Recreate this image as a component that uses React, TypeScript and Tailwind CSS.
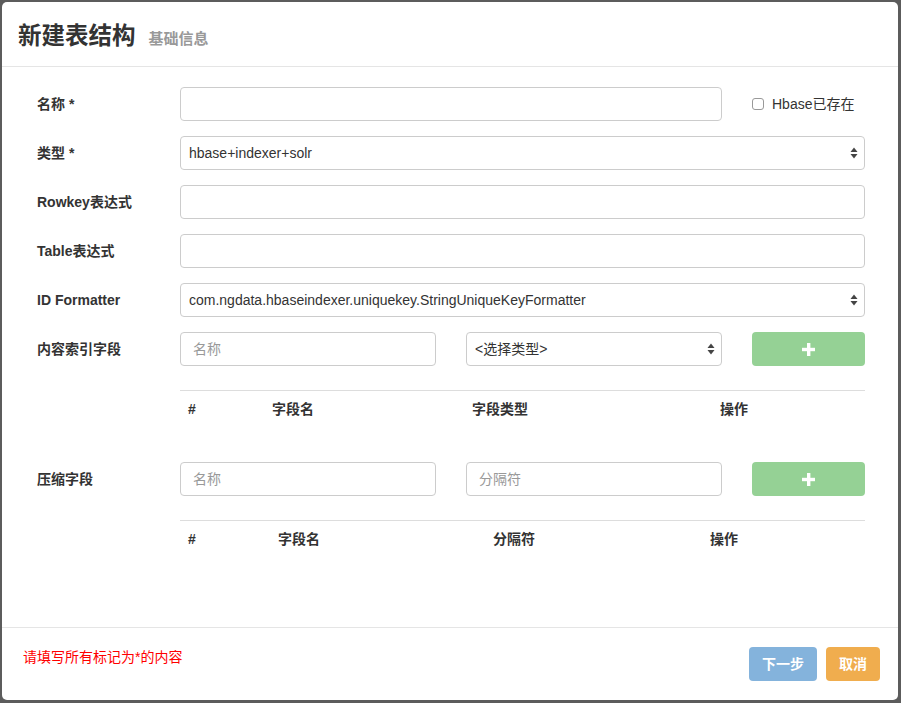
import React from 'react';

const font = { fontFamily: '"Liberation Sans", "Noto Sans CJK SC", sans-serif' };

function Arrows() {
  return (
    <svg width="8" height="12" viewBox="0 0 8 12" className="shrink-0">
      <path d="M4 0.5 L7.5 5 L0.5 5 Z" fill="#444" />
      <path d="M4 11.5 L7.5 7 L0.5 7 Z" fill="#444" />
    </svg>
  );
}

function TextBox({ placeholder }: { placeholder?: string }) {
  return (
    <div className="h-[34px] w-full rounded border border-[#ccc] bg-white px-3 flex items-center text-[14px] text-[#999]">
      {placeholder}
    </div>
  );
}

function SelectBox({ value }: { value: string }) {
  return (
    <div className="h-[34px] w-full rounded border border-[#ccc] bg-white pl-2 pr-[6px] flex items-center justify-between text-[14px] text-[#333]">
      <span>{value}</span>
      <Arrows />
    </div>
  );
}

function AddButton() {
  return (
    <div className="h-[34px] rounded bg-[#95d195] flex items-center justify-center text-white">
      <svg width="13" height="13" viewBox="0 0 13 13">
        <rect x="5" y="0" width="3.4" height="13" fill="#fff" />
        <rect x="0" y="4.8" width="13" height="3.4" fill="#fff" />
      </svg>
    </div>
  );
}

function Row({ label, children }: { label: string; children: React.ReactNode }) {
  return (
    <div className="flex items-center h-[34px]">
      <div className="w-[143px] shrink-0 text-[14px] font-bold text-[#333]">{label}</div>
      <div className="flex-1">{children}</div>
    </div>
  );
}

function TableHead({ cols }: { cols: { text: string; w: string }[] }) {
  return (
    <div className="ml-[143px] border-t border-[#ddd] h-[38px] flex items-center pl-2 text-[14px] font-bold text-[#333]">
      {cols.map((c) => (
        <div key={c.text} className={c.w}>
          {c.text}
        </div>
      ))}
    </div>
  );
}

export default function App() {
  return (
    <div className="w-[901px] h-[703px] bg-[#5c5c5c] pt-[2px] pl-[2px] pr-[3px] pb-[3px]" style={font}>
      <div className="h-full w-full bg-white rounded-[5px] flex flex-col overflow-hidden">
        <div className="h-[65px] border-b border-[#e5e5e5] flex items-baseline pl-4 pt-[19px]">
          <span className="text-[23.5px] font-bold text-[#333] leading-[30px]">新建表结构</span>
          <span className="ml-[13px] text-[15px] text-[#999] font-bold">基础信息</span>
        </div>

        <div className="flex-1 pl-[35px] pr-[33px] pt-[20px] text-[#333]">
          <div className="flex flex-col gap-[15px]">
            <Row label="名称 *">
              <div className="flex items-center">
                <div className="w-[542px]">
                  <TextBox />
                </div>
                <label className="ml-[30px] flex items-center gap-[8px] text-[14px]">
                  <span className="w-[12px] h-[12px] rounded-[3px] border border-[#999] bg-white" />
                  Hbase已存在
                </label>
              </div>
            </Row>
            <Row label="类型 *">
              <SelectBox value="hbase+indexer+solr" />
            </Row>
            <Row label="Rowkey表达式">
              <TextBox />
            </Row>
            <Row label="Table表达式">
              <TextBox />
            </Row>
            <Row label="ID Formatter">
              <SelectBox value="com.ngdata.hbaseindexer.uniquekey.StringUniqueKeyFormatter" />
            </Row>
            <Row label="内容索引字段">
              <div className="grid grid-cols-[256px_256px_113px] gap-[30px]">
                <TextBox placeholder="名称" />
                <SelectBox value="<选择类型>" />
                <AddButton />
              </div>
            </Row>
          </div>

          <div className="mt-[24px]">
            <TableHead
              cols={[
                { text: '#', w: 'w-[84px]' },
                { text: '字段名', w: 'w-[200px]' },
                { text: '字段类型', w: 'w-[248px]' },
                { text: '操作', w: 'w-[60px]' },
              ]}
            />
          </div>

          <div className="mt-[34px]">
            <Row label="压缩字段">
              <div className="grid grid-cols-[256px_256px_113px] gap-[30px]">
                <TextBox placeholder="名称" />
                <TextBox placeholder="分隔符" />
                <AddButton />
              </div>
            </Row>
          </div>

          <div className="mt-[24px]">
            <TableHead
              cols={[
                { text: '#', w: 'w-[90px]' },
                { text: '字段名', w: 'w-[215px]' },
                { text: '分隔符', w: 'w-[217px]' },
                { text: '操作', w: 'w-[60px]' },
              ]}
            />
          </div>
        </div>

        <div className="h-[73px] border-t border-[#e5e5e5] flex items-start pl-[21px] pr-[18px]">
          <div className="mt-[19px] text-[14px] text-[#ff0000]">请填写所有标记为*的内容</div>
          <div className="ml-auto mt-[19px] flex gap-[9px]">
            <div className="h-[34px] w-[68px] rounded bg-[#84b3dc] text-white text-[14px] font-bold flex items-center justify-center">
              下一步
            </div>
            <div className="h-[34px] w-[54px] rounded bg-[#f0ad4e] text-white text-[14px] font-bold flex items-center justify-center">
              取消
            </div>
          </div>
        </div>
      </div>
    </div>
  );
}
